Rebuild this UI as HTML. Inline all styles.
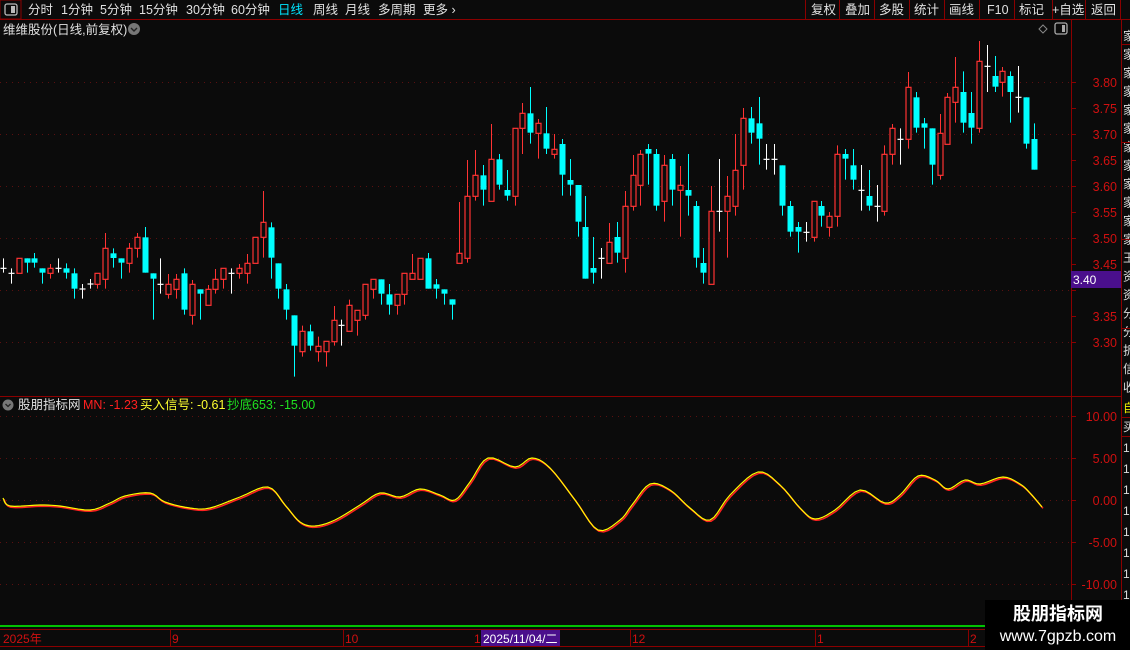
<!DOCTYPE html>
<html><head><meta charset="utf-8"><style>
body{margin:0;background:#0b0b0b;width:1130px;height:650px;overflow:hidden;font-family:"Liberation Sans","Noto Sans CJK SC",sans-serif;}
svg{position:absolute;left:0;top:0}
</style></head><body>
<svg id="s" width="1130" height="650" xmlns="http://www.w3.org/2000/svg" font-family="Liberation Sans, Noto Sans CJK SC, sans-serif">
<rect width="1130" height="650" fill="#0b0b0b"/>
<line x1="0" y1="19.5" x2="1130" y2="19.5" stroke="#8b0000"/>
<rect x="0" y="0" width="21" height="19" fill="none" stroke="#8b0000"/>
<rect x="5" y="4" width="12" height="11" rx="2" fill="none" stroke="#bbb" stroke-width="1.3"/>
<rect x="11" y="6" width="4" height="7" fill="#bbb"/>
<g font-size="12.5" fill="#e0e0e0">
<text x="28" y="14">分时</text><text x="61" y="14">1分钟</text><text x="100" y="14">5分钟</text><text x="139" y="14">15分钟</text><text x="186" y="14">30分钟</text><text x="231" y="14">60分钟</text>
<text x="278" y="14" fill="#00e5ff">日线</text><text x="313" y="14">周线</text><text x="345" y="14">月线</text><text x="378" y="14">多周期</text><text x="423" y="14">更多 ›</text>
</g>
<g stroke="#8b0000"><line x1="805.5" y1="0" x2="805.5" y2="19"/><line x1="839.5" y1="0" x2="839.5" y2="19"/><line x1="874.5" y1="0" x2="874.5" y2="19"/><line x1="909.5" y1="0" x2="909.5" y2="19"/><line x1="944.5" y1="0" x2="944.5" y2="19"/><line x1="979.5" y1="0" x2="979.5" y2="19"/><line x1="1014.5" y1="0" x2="1014.5" y2="19"/><line x1="1052.5" y1="0" x2="1052.5" y2="19"/><line x1="1085.5" y1="0" x2="1085.5" y2="19"/><line x1="1120.5" y1="0" x2="1120.5" y2="19"/></g>
<g font-size="12.5" fill="#e0e0e0">
<text x="811" y="14">复权</text><text x="845" y="14">叠加</text><text x="879" y="14">多股</text><text x="914" y="14">统计</text><text x="949" y="14">画线</text><text x="987" y="14">F10</text><text x="1019" y="14">标记</text><text x="1052" y="14">+自选</text><text x="1091" y="14">返回</text>
</g>
<text x="3" y="34" font-size="12.5" fill="#e0e0e0">维维股份(日线,前复权)</text>
<circle cx="134" cy="29" r="6" fill="#777"/><path d="M131 28l3 3 3-3" stroke="#222" fill="none" stroke-width="1.4"/>
<path d="M1043 25l4 4-4 4-4-4z" fill="none" stroke="#888"/>
<rect x="1055" y="23" width="12" height="11" rx="2" fill="none" stroke="#aaa" stroke-width="1.3"/><rect x="1062" y="25" width="3" height="7" fill="#aaa"/>
<line x1="1071.5" y1="19" x2="1071.5" y2="630" stroke="#8b0000"/>
<line x1="1121.5" y1="19" x2="1121.5" y2="650" stroke="#8b0000"/>
<line x1="0" y1="396.5" x2="1122" y2="396.5" stroke="#8b0000"/>
<g id="grid"></g>
<rect x="1071" y="271" width="50" height="17" fill="#4a0f8c"/>
<text x="1073" y="284" font-size="12" fill="#fff">3.40</text>
<g id="cand"></g>
<circle cx="8" cy="405" r="5.5" fill="#777"/><path d="M5.5 404l2.5 2.5 2.5-2.5" stroke="#222" fill="none" stroke-width="1.3"/>
<text x="18" y="409" font-size="12.5" fill="#e0e0e0">股朋指标网</text>
<text x="83" y="409" font-size="12.5" fill="#ff2020">MN: -1.23</text>
<text x="140" y="409" font-size="12.5" fill="#ffff30">买入信号: -0.61</text>
<text x="227" y="409" font-size="12.5" fill="#20e020">抄底653: -15.00</text>
<polyline id="l1" fill="none" stroke="#ff2020" stroke-width="1.5" stroke-linejoin="round"/>
<polyline id="l2" fill="none" stroke="#ffff00" stroke-width="1.2" stroke-linejoin="round"/>
<line x1="0" y1="626" x2="985" y2="626" stroke="#00ff00" stroke-width="1.5"/>
<line x1="0" y1="629.5" x2="1122" y2="629.5" stroke="#8b0000"/>
<line x1="0" y1="646.5" x2="1122" y2="646.5" stroke="#8b0000"/>
<g stroke="#8b0000"><line x1="170.5" y1="630" x2="170.5" y2="646"/><line x1="343.5" y1="630" x2="343.5" y2="646"/><line x1="630.5" y1="630" x2="630.5" y2="646"/><line x1="815.5" y1="630" x2="815.5" y2="646"/><line x1="968.5" y1="630" x2="968.5" y2="646"/></g>
<g font-size="12" fill="#d01010"><text x="3" y="643">2025年</text><text x="172" y="643">9</text><text x="345" y="643">10</text><text x="474" y="643">1</text><text x="632" y="643">12</text><text x="817" y="643">1</text><text x="970" y="643">2</text></g>
<rect x="481" y="630" width="79" height="16" fill="#4a0f8c"/>
<text x="483" y="643" font-size="12" fill="#fff">2025/11/04/二</text>
<g id="side" font-size="12" fill="#ddd"></g>
<g stroke="#8b0000"><line x1="1122" y1="44.5" x2="1130" y2="44.5"/><line x1="1122" y1="142.5" x2="1130" y2="142.5"/><line x1="1122" y1="239.5" x2="1130" y2="239.5"/><line x1="1122" y1="328.5" x2="1130" y2="328.5"/><line x1="1122" y1="417.5" x2="1130" y2="417.5"/><line x1="1122" y1="436.5" x2="1130" y2="436.5"/></g>
<rect x="985" y="600" width="145" height="50" fill="#000"/>
<text x="1058" y="620" font-size="18" font-weight="bold" fill="#fff" text-anchor="middle">股朋指标网</text>
<text x="1058" y="641" font-size="16" fill="#fff" text-anchor="middle">www.7gpzb.com</text>
</svg>
<script>
var NS="http://www.w3.org/2000/svg";
function el(p,t,a){var e=document.createElementNS(NS,t);for(var k in a)e.setAttribute(k,a[k]);p.appendChild(e);return e;}
var sd=document.getElementById('side');
var sc="家家家家家家家家家家家家王资资分分折信收";
for(var i=0;i<sc.length;i++){var t=el(sd,'text',{x:1123,y:40+i*18.5});t.textContent=sc[i];}
var t=el(sd,'text',{x:1123,y:412,fill:'#ee0'});t.textContent='自';
t=el(sd,'text',{x:1123,y:431});t.textContent='买';
for(var i=0;i<8;i++){t=el(sd,'text',{x:1123,y:452+i*21});t.textContent='1';}
var g=document.getElementById('grid');
for(var i=0;i<11;i++){var y=82+i*26,v=(3.80-i*0.05).toFixed(2);
 el(g,'line',{x1:1071,y1:y+.5,x2:1076,y2:y+.5,stroke:'#8b0000'});
 if(i%2==0)el(g,'line',{x1:0,y1:y+.5,x2:1071,y2:y+.5,stroke:'#5a1010','stroke-dasharray':'1 5'});
 if(i!=8){var tt=el(g,'text',{x:1117,y:y+5,'font-size':12.5,fill:'#d01010','text-anchor':'end'});tt.textContent=v;}}
var lv=[10,5,0,-5,-10];
for(var i=0;i<5;i++){var y=416+i*42;
 el(g,'line',{x1:0,y1:y+.5,x2:1071,y2:y+.5,stroke:'#5a1010','stroke-dasharray':'1 5'});
 el(g,'line',{x1:1071,y1:y+.5,x2:1076,y2:y+.5,stroke:'#8b0000'});
 var tt=el(g,'text',{x:1117,y:y+5,'font-size':12.5,fill:'#d01010','text-anchor':'end'});tt.textContent=lv[i].toFixed(2);}
var A=[['w',265,265,235,278],['w',280,280,265,311],['r',235,280,235,280],['c',235,248,235,278],['c',235,248,219,263],['c',265,278,265,311],['r',265,280,252,296],['w',265,265,235,278],['c',265,278,250,296],['c',280,326,265,356],['w',327,327,312,356],['w',312,312,297,326],['r',280,313,280,326],['r',205,298,159,326],['c',220,234,205,263],['c',235,248,235,296],['r',205,250,189,278],['r',172,205,159,233],['c',172,278,141,278],['c',280,296,280,419],['w',313,313,235,341],['r',313,343,282,356],['r',298,328,282,356],['c',280,389,265,404],['r',313,406,300,434],['c',328,341,328,419],['r',328,376,315,376],['r',298,328,267,341],['r',265,298,265,326],['w',280,280,265,341],['r',265,280,252,296],['r',250,280,222,311],['r',172,250,172,250],['r',127,172,33,233],['c',142,233,127,296],['c',250,326,250,356],['c',328,389,312,419],['c',406,497,406,590],['r',454,515,437,530],['c',454,497,434,512],['r',499,515,470,545],['r',484,515,484,560],['r',421,485,378,497],['w',436,436,419,497],['r',376,454,359,454],['r',391,421,391,467],['r',313,406,313,419],['r',298,328,298,356],['c',298,341,298,374],['c',343,374,312,404],['r',343,376,343,404],['r',280,343,280,374],['r',280,298,222,298],['r',235,298,235,298],['c',235,326,219,326],['c',313,326,297,356],['c',328,341,328,374],['c',358,374,358,419]];
var B=[['r',520,550,366,550],['r',349,535,240,548],['r',286,349,210,362],['c',286,329,255,377],['r',238,364,132,364],['c',238,314,222,329],['c',330,347,270,362],['r',145,349,145,377],['r',100,145,69,222],['c',100,158,21,191],['r',130,160,117,236],['c',160,206,81,222],['r',208,223,162,236],['c',192,284,177,347],['c',300,314,237,347],['c',315,425,315,470],['c',441,596,348,596],['c',564,578,471,611],['w',535,535,504,596],['r',487,550,429,550],['c',471,518,426,548],['r',379,535,333,578],['r',286,379,225,392],['r',223,316,210,377],['c',207,221,192,314],['c',222,377,207,392],['r',256,364,225,425],['c',237,329,222,377],['r',316,331,258,470],['c',330,347,222,407],['c',378,533,363,563],['c',549,578,504,611],['r',394,613,318,613],['w',394,394,237,455],['r',349,394,288,533],['r',271,379,162,407],['r',115,256,84,329],['c',115,158,81,191],['c',130,176,51,254]];
var C=[['w',358,358,312,389],['w',358,358,312,404],['c',376,497,376,527],['c',498,575,483,590],['c',561,575,546,638],['w',577,577,546,605],['r',484,592,484,605],['c',498,527,483,560],['r',529,562,516,590],['r',343,529,316,560],['c',342,356,327,419],['c',376,419,327,449],['w',451,451,375,512],['c',468,497,390,512],['w',499,499,435,545],['r',343,514,316,527],['r',265,343,252,374],['w',298,298,265,374],['r',142,298,96,326],['c',172,263,156,278],['c',250,263,234,326],['c',265,374,265,434],['r',280,406,222,419],['r',172,313,159,313],['r',142,187,51,248],['c',156,248,94,278],['c',219,263,156,311],['r',64,265,3,278],['w',79,79,15,156],['c',108,140,48,156],['r',94,127,81,170],['c',108,156,94,248],['w',172,172,78,218],['c',172,311,172,326],['c',297,389,250,389]];
var data=[];
A.forEach(function(d){data.push([d[0],180+d[1]/3,180+d[2]/3,180+d[3]/3,180+d[4]/3]);});
B.forEach(function(d){data.push([d[0],80+d[1]/3,80+d[2]/3,80+d[3]/3,80+d[4]/3]);});
C.forEach(function(d){data.push([d[0],40+d[1]/3,40+d[2]/3,40+d[3]/3,40+d[4]/3]);});
var cg=document.getElementById('cand');
data.forEach(function(d,i){var x=Math.round(3+i*7.87)+.5;var t=d[0],col=t=='r'?'#ff3333':t=='c'?'#00ffff':'#ffffff';
 el(cg,'line',{x1:x,y1:d[3],x2:x,y2:d[4],stroke:col,'stroke-width':1});
 if(t=='w'){el(cg,'line',{x1:x-3,y1:d[1],x2:x+3,y2:d[1],stroke:col,'stroke-width':1.2});}
 else if(t=='c'){el(cg,'rect',{x:x-3,y:d[1],width:6,height:Math.max(d[2]-d[1],2),fill:col});}
 else{el(cg,'rect',{x:x-2.5,y:d[1],width:5,height:Math.max(d[2]-d[1],2),fill:'#0b0b0b',stroke:col,'stroke-width':1.2});}
});
var P=[[3,498],[10,506],[40,505],[60,506],[90,510],[110,503],[125,496],[150,493],[165,502],[190,508],[210,508],[240,497],[268,487],[285,505],[300,522],[315,526],[335,520],[360,505],[380,493],[400,497],[420,489],[440,495],[455,500],[470,482],[488,458],[515,467],[532,458],[550,468],[575,500],[598,530],[620,520],[632,505],[650,484],[670,490],[690,508],[710,520],[730,495],[758,472],[780,485],[800,508],[815,519],[835,510],[860,490],[885,503],[900,495],[918,476],[935,480],[948,489],[965,480],[980,484],[1003,477],[1020,484],[1030,493],[1042,507]];
var S=[];for(var i=0;i<P.length-1;i++){var p0=P[Math.max(i-1,0)],p1=P[i],p2=P[i+1],p3=P[Math.min(i+2,P.length-1)];
 for(var t=0;t<1;t+=0.2){var t2=t*t,t3=t2*t;
 var x=0.5*((2*p1[0])+(-p0[0]+p2[0])*t+(2*p0[0]-5*p1[0]+4*p2[0]-p3[0])*t2+(-p0[0]+3*p1[0]-3*p2[0]+p3[0])*t3);
 var y=0.5*((2*p1[1])+(-p0[1]+p2[1])*t+(2*p0[1]-5*p1[1]+4*p2[1]-p3[1])*t2+(-p0[1]+3*p1[1]-3*p2[1]+p3[1])*t3);S.push([x,y]);}}
S.push(P[P.length-1]);
document.getElementById('l1').setAttribute('points',S.map(function(p){return (p[0]+1)+','+(p[1]+1.3)}).join(' '));
document.getElementById('l2').setAttribute('points',S.map(function(p){return p[0]+','+p[1]}).join(' '));
</script>
</body></html>
